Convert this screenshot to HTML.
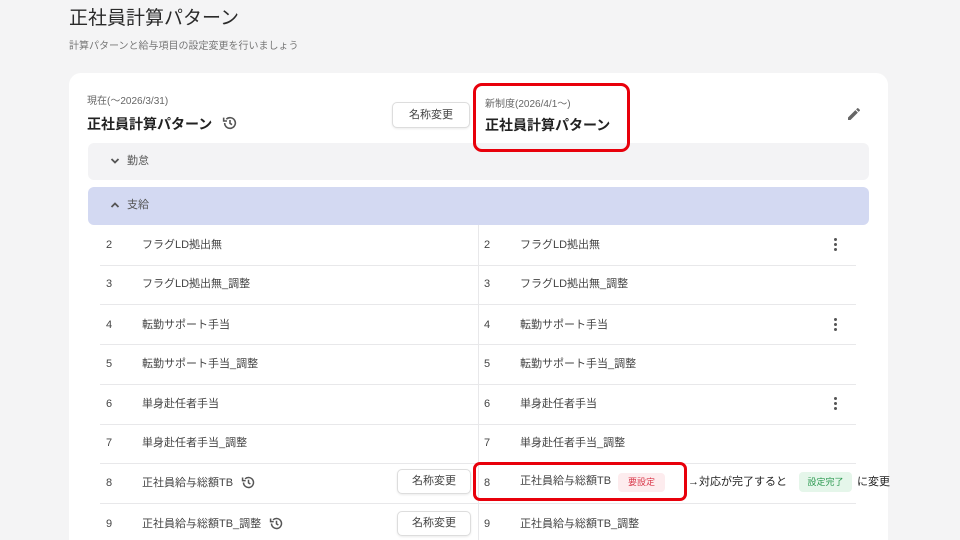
<!DOCTYPE html>
<html><head><meta charset="utf-8"><style>
*{margin:0;padding:0;box-sizing:border-box}
html,body{width:960px;height:540px;overflow:hidden}
body{background:#f4f4f5;font-family:"Liberation Sans","Noto Sans CJK JP",sans-serif;color:#333;position:relative;line-height:1.2}
.a{position:absolute;white-space:nowrap}
.card{position:absolute;left:69px;top:73px;width:819px;height:467px;background:#fff;border-radius:12px 12px 0 0}
.btn{position:absolute;border:1px solid #ddd;border-radius:5px;background:#fff;font-size:11px;color:#444;text-align:center;box-shadow:0 1px 2px rgba(0,0,0,.08)}
.sec{position:absolute;left:88px;width:781px;border-radius:6px}
.line{position:absolute;left:100px;width:756px;height:1px;background:#e8e8ea}
.n,.t{font-size:11px;color:#444;line-height:14px}
.dots{position:absolute;left:834px;width:3px}
.dots i{display:block;width:3px;height:3px;border-radius:50%;background:#555;margin-bottom:2px}
.red{z-index:5}
</style></head><body>
<div class="a" style="left:69px;top:8px;font-size:19px;color:#2a2a2a">正社員計算パターン</div>
<div class="a" style="left:69px;top:41px;font-size:10px;color:#777">計算パターンと給与項目の設定変更を行いましょう</div>
<div class="card"></div>
<div class="a" style="left:87px;top:96px;font-size:10px;color:#666">現在(〜2026/3/31)</div>
<div class="a" style="left:87px;top:116px;font-size:14px;font-weight:bold;color:#222">正社員計算パターン</div>
<svg class="a" style="left:222px;top:115px" width="16" height="16" viewBox="0 0 24 24"><path d="M4 12a8 8 0 1 0 2.5-5.8" fill="none" stroke="#555" stroke-width="2.4"/><path d="M2.5 4v5h5" fill="none" stroke="#555" stroke-width="2.4"/><path d="M12 7.5v5l3 2" fill="none" stroke="#555" stroke-width="2.4"/></svg>
<div class="btn" style="left:392px;top:102px;width:78px;height:26px;line-height:24px">名称変更</div>
<div class="a red" style="left:473px;top:83px;width:157px;height:69px;border:3px solid #e8000b;border-radius:9px"></div>
<div class="a" style="left:485px;top:99px;font-size:10px;color:#666">新制度(2026/4/1〜)</div>
<div class="a" style="left:485px;top:117px;font-size:14px;font-weight:bold;color:#222">正社員計算パターン</div>
<svg class="a" style="left:846px;top:106px" width="16" height="16" viewBox="0 0 24 24"><path d="M3 17.25V21h3.75L17.8 9.94l-3.75-3.75L3 17.25zM20.7 7.04a1 1 0 0 0 0-1.41l-2.34-2.34a1 1 0 0 0-1.41 0l-1.83 1.83 3.75 3.75 1.83-1.83z" fill="#666"/></svg>
<div class="sec" style="top:143px;height:37px;background:#f3f3f5"></div>
<svg class="a" style="left:110px;top:157px" width="10" height="8" viewBox="0 0 10 8"><path d="M1.5 2l3.5 3.5L8.5 2" fill="none" stroke="#555" stroke-width="1.8"/></svg>
<div class="a" style="left:127px;top:155px;font-size:11px;color:#555">勤怠</div>
<div class="sec" style="top:187px;height:38px;background:#d3d9f2"></div>
<svg class="a" style="left:110px;top:201px" width="10" height="8" viewBox="0 0 10 8"><path d="M1.5 6l3.5-3.5L8.5 6" fill="none" stroke="#555" stroke-width="1.8"/></svg>
<div class="a" style="left:127px;top:199px;font-size:11px;color:#555">支給</div>
<div class="a" style="left:478px;top:225px;width:1px;height:315px;background:#e8e8ea"></div>
<div class="line" style="top:265px"></div><div class="line" style="top:304px"></div><div class="line" style="top:344px"></div><div class="line" style="top:384px"></div><div class="line" style="top:424px"></div><div class="line" style="top:463px"></div><div class="line" style="top:503px"></div>

<div class="a n" style="left:106px;top:238px">2</div><div class="a t" style="left:142px;top:238px">フラグLD拠出無</div>
<div class="a n" style="left:484px;top:238px">2</div><div class="a t" style="left:520px;top:238px">フラグLD拠出無</div>
<div class="dots" style="top:238px"><i></i><i></i><i></i></div>
<div class="a n" style="left:106px;top:277px">3</div><div class="a t" style="left:142px;top:277px">フラグLD拠出無_調整</div>
<div class="a n" style="left:484px;top:277px">3</div><div class="a t" style="left:520px;top:277px">フラグLD拠出無_調整</div>
<div class="a n" style="left:106px;top:318px">4</div><div class="a t" style="left:142px;top:318px">転勤サポート手当</div>
<div class="a n" style="left:484px;top:318px">4</div><div class="a t" style="left:520px;top:318px">転勤サポート手当</div>
<div class="dots" style="top:318px"><i></i><i></i><i></i></div>
<div class="a n" style="left:106px;top:357px">5</div><div class="a t" style="left:142px;top:357px">転勤サポート手当_調整</div>
<div class="a n" style="left:484px;top:357px">5</div><div class="a t" style="left:520px;top:357px">転勤サポート手当_調整</div>
<div class="a n" style="left:106px;top:397px">6</div><div class="a t" style="left:142px;top:397px">単身赴任者手当</div>
<div class="a n" style="left:484px;top:397px">6</div><div class="a t" style="left:520px;top:397px">単身赴任者手当</div>
<div class="dots" style="top:397px"><i></i><i></i><i></i></div>
<div class="a n" style="left:106px;top:436px">7</div><div class="a t" style="left:142px;top:436px">単身赴任者手当_調整</div>
<div class="a n" style="left:484px;top:436px">7</div><div class="a t" style="left:520px;top:436px">単身赴任者手当_調整</div>

<div class="a n" style="left:106px;top:476px">8</div><div class="a t" style="left:142px;top:476px">正社員給与総額TB</div>
<svg class="a" style="left:241px;top:475px" width="15" height="15" viewBox="0 0 24 24"><path d="M4 12a8 8 0 1 0 2.5-5.8" fill="none" stroke="#555" stroke-width="2.4"/><path d="M2.5 4v5h5" fill="none" stroke="#555" stroke-width="2.4"/><path d="M12 7.5v5l3 2" fill="none" stroke="#555" stroke-width="2.4"/></svg>
<div class="btn" style="left:397px;top:469px;width:74px;height:25px;line-height:23px">名称変更</div>
<div class="a red" style="left:473px;top:462px;width:214px;height:39px;border:3px solid #e8000b;border-radius:7px"></div>
<div class="a n" style="left:484px;top:476px">8</div><div class="a t" style="left:520px;top:474px">正社員給与総額TB</div>
<div class="a" style="left:618px;top:473px;width:47px;height:19px;background:#fdecee;border-radius:4px;color:#d9384a;font-size:9px;text-align:center;line-height:19px">要設定</div>
<div class="a" style="left:688px;top:475px;font-size:11px;color:#222;line-height:14px">→対応が完了すると</div>
<div class="a" style="left:799px;top:472px;width:53px;height:20px;background:#e5f6ea;border-radius:4px;color:#2e9a52;font-size:9px;text-align:center;line-height:20px">設定完了</div>
<div class="a" style="left:857px;top:475px;font-size:11px;color:#222;line-height:14px">に変更</div>

<div class="a n" style="left:106px;top:517px">9</div><div class="a t" style="left:142px;top:517px">正社員給与総額TB_調整</div>
<svg class="a" style="left:269px;top:516px" width="15" height="15" viewBox="0 0 24 24"><path d="M4 12a8 8 0 1 0 2.5-5.8" fill="none" stroke="#555" stroke-width="2.4"/><path d="M2.5 4v5h5" fill="none" stroke="#555" stroke-width="2.4"/><path d="M12 7.5v5l3 2" fill="none" stroke="#555" stroke-width="2.4"/></svg>
<div class="btn" style="left:397px;top:511px;width:74px;height:25px;line-height:23px">名称変更</div>
<div class="a n" style="left:484px;top:517px">9</div><div class="a t" style="left:520px;top:517px">正社員給与総額TB_調整</div>
</body></html>
